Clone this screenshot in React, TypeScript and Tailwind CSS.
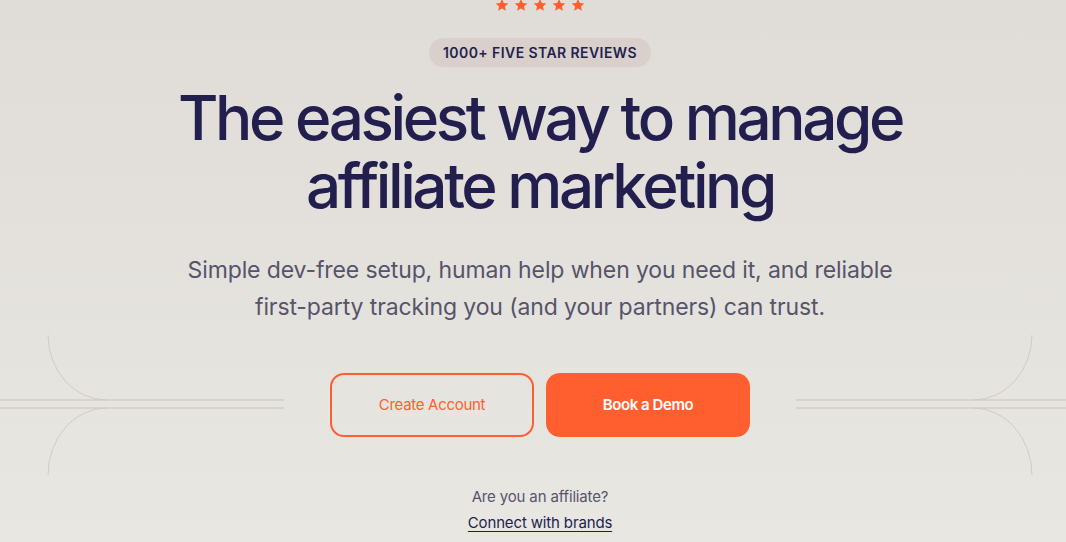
import React from "react";

function Star() {
  return (
    <svg width="14" height="14" viewBox="0 0 24 24" className="fill-[#ff5f2e]">
      <path d="M12 1.5l3.1 7.1 7.7.7-5.8 5.1 1.7 7.6L12 18l-6.7 4 1.7-7.6L1.2 9.3l7.7-.7z" />
    </svg>
  );
}

function LeftLines() {
  return (
    <svg width="284" height="140" viewBox="0 0 284 140" fill="none">
      <path d="M0 65H284M0 73H284" stroke="#d5cdc7" strokeWidth="1.6" />
      <path d="M48 0A59 65 0 0 0 107 65M107 73A59 67 0 0 0 48 140" stroke="#d3cbc5" strokeWidth="1" />
    </svg>
  );
}

function RightLines() {
  return (
    <svg width="285" height="140" viewBox="0 0 285 140" fill="none">
      <path d="M0 65H285M0 73H285" stroke="#d5cdc7" strokeWidth="1.6" />
      <path d="M236 0A59 65 0 0 1 177 65M177 73A59 67 0 0 1 236 140" stroke="#d3cbc5" strokeWidth="1" />
    </svg>
  );
}

export default function App() {
  return (
    <div className="h-[542px] w-full overflow-hidden bg-gradient-to-b from-[#e0dcd8] to-[#e8e7e2] font-['Inter',sans-serif]">
      <main className="flex w-[1080px] flex-col items-center">
        {/* rating */}
        <div className="-mt-[2px] flex gap-[5px]">
          <Star />
          <Star />
          <Star />
          <Star />
          <Star />
        </div>
        <div className="mt-[26px] flex h-[29px] items-center rounded-full bg-[#d9d0cb] px-[14px] text-[14px] font-semibold tracking-[0.03em] text-[#221f4e]">
          1000+ FIVE STAR REVIEWS
        </div>

        <h1 className="mt-[17px] text-center text-[62px] font-medium leading-[68px] tracking-[-0.055em] text-[#221f4e]">
          The easiest way to manage
          <br />
          affiliate marketing
        </h1>

        <p className="mt-[32px] text-center text-[23px] leading-[37px] tracking-[-0.005em] text-[#56546b]">
          Simple dev-free setup, human help when you need it, and reliable
          <br />
          first-party tracking you (and your partners) can trust.
        </p>

        {/* actions */}
        <div className="mt-[9px] flex w-full items-center">
          <div className="flex-1">
            <LeftLines />
          </div>
          <div className="mx-[46px] flex gap-[12px]">
            <button className="flex h-[64px] w-[204px] items-center justify-center rounded-[14px] border-2 border-[#ff5f2e] text-[15px] tracking-[-0.02em] text-[#ff5f2e]">
              Create Account
            </button>
            <button className="flex h-[64px] w-[204px] items-center justify-center rounded-[14px] bg-[#ff5f2e] text-[15px] font-semibold tracking-[-0.03em] text-white">
              Book a Demo
            </button>
          </div>
          <div className="flex flex-1 justify-end">
            <RightLines />
          </div>
        </div>

        <div className="mt-[9px] flex flex-col items-center text-[15px] tracking-[-0.01em]">
          <span className="leading-[26px] text-[#56546b]">Are you an affiliate?</span>
          <a className="leading-[26px] text-[#221f4e] underline underline-offset-[3px]">
            Connect with brands
          </a>
        </div>
      </main>
    </div>
  );
}
